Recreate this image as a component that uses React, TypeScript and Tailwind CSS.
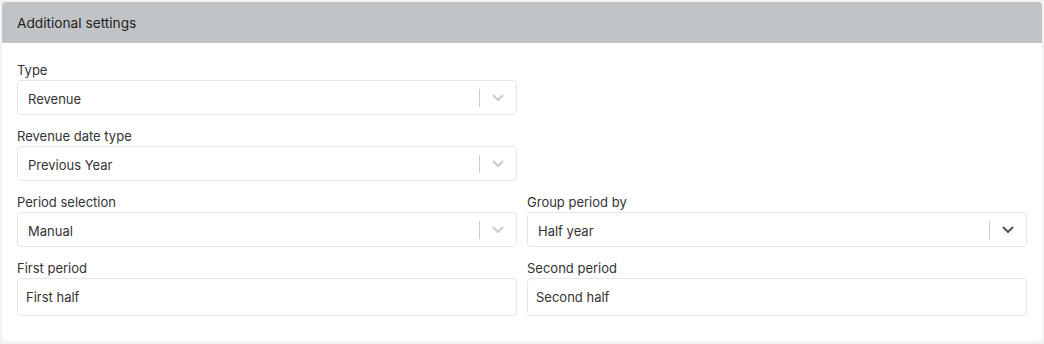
import React from "react";

function Chevron({ dark }: { dark?: boolean }) {
  return (
    <svg width="12" height="8" viewBox="0 0 12 8" fill="none">
      <path
        d="M1.5 1.5 L6 6 L10.5 1.5"
        stroke={dark ? "#555" : "#cccccc"}
        strokeWidth="2"
        strokeLinecap="round"
        strokeLinejoin="round"
      />
    </svg>
  );
}

function Select({ value, dark }: { value: string; dark?: boolean }) {
  return (
    <div className="flex h-[35px] items-center rounded-[4px] border border-[#e6e6e6] bg-white">
      <div className="flex-1 pl-[10px] pt-[5px] text-[13px] text-[#333]">{value}</div>
      <div className="h-[18px] w-px bg-[#cccccc]" />
      <div className="flex w-[36px] items-center justify-center">
        <Chevron dark={dark} />
      </div>
    </div>
  );
}

function Input({ value }: { value: string }) {
  return (
    <div className="flex h-[38px] items-center rounded-[4px] border border-[#e6e6e6] bg-white pl-[8px] pt-[2px] text-[13px] text-[#333]">
      {value}
    </div>
  );
}

function Field({ label, children }: { label: string; children: React.ReactNode }) {
  return (
    <div className="flex flex-col">
      <div className="h-[17px] text-[13px] leading-[15px] text-[#333]">{label}</div>
      {children}
    </div>
  );
}

export default function App() {
  return (
    <div
      className="h-[344px] w-[1044px] bg-[#f3f3f3] p-[2px]"
      style={{ fontFamily: "Inter, 'Liberation Sans', sans-serif" }}
    >
      <div className="h-[339px] w-[1040px] overflow-hidden rounded-[4px] bg-white">
        <div className="flex h-[41px] items-center bg-[#c1c4c7] px-[15px] pt-[2px] text-[13.7px] text-[#222]">
          Additional settings
        </div>
        <div className="grid grid-cols-2 gap-x-[10px] gap-y-[14px] px-[15px] pt-[20px]">
          <Field label="Type">
            <Select value="Revenue" />
          </Field>
          <div />
          <Field label="Revenue date type">
            <Select value="Previous Year" />
          </Field>
          <div />
          <Field label="Period selection">
            <Select value="Manual" />
          </Field>
          <Field label="Group period by">
            <Select value="Half year" dark />
          </Field>
          <Field label="First period">
            <Input value="First half" />
          </Field>
          <Field label="Second period">
            <Input value="Second half" />
          </Field>
        </div>
      </div>
    </div>
  );
}
